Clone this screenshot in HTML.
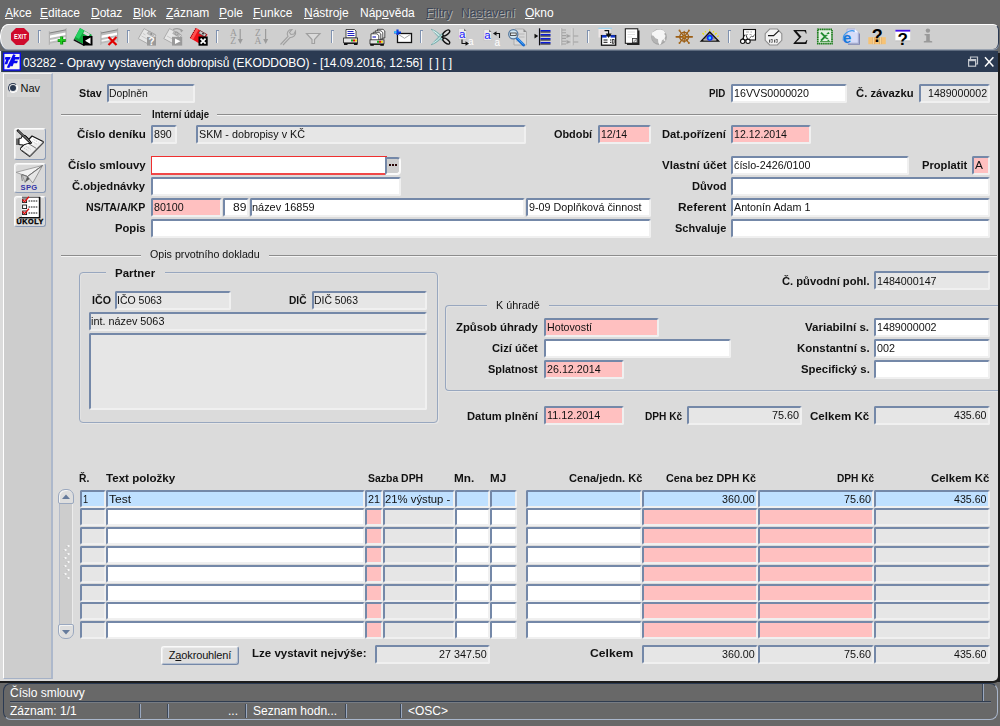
<!DOCTYPE html><html><head><meta charset="utf-8"><title>Form</title><style>
*{box-sizing:border-box;margin:0;padding:0}
html,body{width:1000px;height:726px;overflow:hidden;background:#696969;font-family:"Liberation Sans",sans-serif;}
body{position:relative}
.a{position:absolute}
.menu{position:absolute;left:0;top:0;width:1000px;height:22px;background:#696969;color:#fff;font-size:12px;line-height:14px}
.menu span{position:absolute;top:6px;white-space:nowrap}
.menu u{text-decoration:underline;text-underline-offset:1px;text-decoration-thickness:1px}
.menu .dis{color:#3c4658;text-shadow:1px 1px 0 #b0b0b0}
.tb{position:absolute;left:0;top:24px;width:999px;height:25px;background:#cfcfcf;border-radius:8px 6px 6px 8px / 12px 6px 6px 12px;border-top:1px solid #fff;border-left:1px solid #fff;border-right:1px solid #2b3a52;box-shadow:0 1px 0 #9aa3b0, 0 2px 0 #5d6a7e}
.sep{position:absolute;top:30px;width:3px;height:13px;border-left:1px solid #7f92b0;border-top:1px solid #7f92b0;box-shadow:inset 1px 0 0 #f8f8f8}
.title{position:absolute;left:1px;top:51px;width:997px;height:21px;background:#2b3a52;color:#fff;font-size:12px;line-height:23px;white-space:nowrap;letter-spacing:-0.05px}
.form{position:absolute;left:0px;top:72px;width:998px;height:609px;background:#dbdbdb;border-bottom-right-radius:5px;box-shadow:1px 1px 0 1px #1c1c1c}
.left{position:absolute;left:3px;top:73px;width:50px;height:606px;background:#cdcdcd;border-left:1px solid #fff;border-top:1px solid #f0f0f0;border-right:2px solid #adb8cb;border-bottom:1px solid #a5b1c6}
.l{position:absolute;font-size:11px;font-weight:bold;color:#111;white-space:nowrap;line-height:13px;text-align:right}
.ll{position:absolute;font-size:11px;font-weight:bold;color:#111;white-space:nowrap;line-height:13px;text-align:left}
.n{position:absolute;font-size:11px;color:#111;white-space:nowrap;line-height:13px}
.f{position:absolute;font-size:11px;color:#111;white-space:nowrap;overflow:hidden;background:#fff;border-top:2px solid #7488a8;border-left:2px solid #7488a8;border-bottom:2px solid #f0f0f0;border-right:2px solid #f0f0f0;padding-left:0px;padding-right:1px;letter-spacing:-0.28px;border-radius:2px}
.f.d{background:#e6e6e6}
.f.p{background:#ffc0c0}
.f.s{background:#bfe0ff}
.f.r{text-align:right}
.hl{position:absolute;height:2px;border-top:1px solid #8c8c8c;border-bottom:1px solid #f4f4f4}
.gb{position:absolute;border:1px solid #98a7bf;border-radius:4px;box-shadow:1px 1px 0 #e6e6e6, inset 1px 1px 0 #e2e2e2}
.gbl{position:absolute;background:#dbdbdb;font-size:11px;line-height:13px;white-space:nowrap;color:#111;letter-spacing:-0.2px}
.lb{position:absolute;left:14px;width:32px;background:#d9d9d9;border-top:1px solid #fbfbfb;border-left:1px solid #fbfbfb;border-right:1px solid #8b9bb6;border-bottom:1px solid #8b9bb6;border-radius:3px;box-shadow:inset 1px 1px 0 #efefef}
.status{position:absolute;left:0;top:683px;width:1000px;height:43px;background:#686868;color:#fff;font-size:12px}
</style></head><body>
<div class="menu">
<span style="left:5px"><u>A</u>kce</span>
<span style="left:40px"><u>E</u>ditace</span>
<span style="left:91px"><u>D</u>otaz</span>
<span style="left:133px"><u>B</u>lok</span>
<span style="left:166px"><u>Z</u>áznam</span>
<span style="left:219px"><u>P</u>ole</span>
<span style="left:253px"><u>F</u>unkce</span>
<span style="left:304px"><u>N</u>ástroje</span>
<span style="left:360px">Náp<u>o</u>věda</span>
<span style="left:426px" class="dis"><u>F</u>iltry</span>
<span style="left:461px" class="dis">Na<u>s</u>tavení</span>
<span style="left:525px"><u>O</u>kno</span>
</div>
<div class="tb"></div>
<div class="sep" style="left:38px"></div>
<div class="sep" style="left:127px"></div>
<div class="sep" style="left:216px"></div>
<div class="sep" style="left:331px"></div>
<div class="sep" style="left:420px"></div>
<div class="sep" style="left:587px"></div>
<div class="sep" style="left:728px"></div>
<svg class="a" style="left:0;top:22px" width="1000" height="30" viewBox="0 22 1000 30" font-family="Liberation Sans, sans-serif">

<polygon points="16,28 24,28 29,33 29,40 24,45 16,45 11,40 11,33" fill="#cf0a2c"/>
<text x="14" y="38.9" font-size="7" font-weight="bold" fill="#fff" textLength="12.6" lengthAdjust="spacingAndGlyphs">EXIT</text>

<g id="rec">
<polygon points="49.5,33 66,29.8 66,40.5 49.5,43.7" fill="#bcbcbc"/>
<polygon points="50,35.6 65.5,32.6 65.5,35 50,38" fill="#fff"/>
<polygon points="50,40 65.5,37 65.5,38.8 50,41.8" fill="#f6f6f6"/>
<path d="M49.3,31.5 V45 M66.2,28.5 V42" stroke="#8c8c8c" stroke-width="0.8" stroke-dasharray="1 1"/>
<path d="M49.5,33 L66,29.8" stroke="#7c7c7c" stroke-width="0.9"/>
</g>
<path d="M61.7,36.5 V44.5 M57.7,40.5 H65.7" stroke="#0a8f0a" stroke-width="3"/>
<path d="M61.2,37 V44 M58.2,40 H65" stroke="#22d422" stroke-width="1.4"/>

<polygon points="80,28 92,35 85,45 74,39" fill="#0ea83c"/>
<polygon points="80,28 84,30.5 79,39 75.5,37" fill="#25d060"/>
<polygon points="84.5,31 90,34 88.5,36.5 83,33.5" fill="#d8d8d8"/>
<polygon points="74,39 85,45 84,46 73.5,40.5" fill="#111"/>
<rect x="83" y="36" width="9.5" height="9.5" fill="#000"/>
<polygon points="85,40.7 90.5,37.5 90.5,44" fill="#fff"/>

<g transform="translate(51.5,0)">
<polygon points="49.5,33 66,29.8 66,40.5 49.5,43.7" fill="#bcbcbc"/>
<polygon points="50,35.6 65.5,32.6 65.5,35 50,38" fill="#fff"/>
<polygon points="50,40 65.5,37 65.5,38.8 50,41.8" fill="#f6f6f6"/>
<path d="M49.3,31.5 V45 M66.2,28.5 V42" stroke="#8c8c8c" stroke-width="0.8" stroke-dasharray="1 1"/>
<path d="M49.5,33 L66,29.8" stroke="#7c7c7c" stroke-width="0.9"/>
</g>
<path d="M108.5,37 L116.5,45 M116.5,37 L108.5,45" stroke="#e00000" stroke-width="2.2"/>

<polygon points="144,28.6 156,35 150,45 138.3,38.6" fill="#e6e6e6" stroke="#a6a6a6" stroke-width="0.9"/>
<polygon points="148.8,31 154.6,34.2 153,36.8 147.2,33.6" fill="#bdbdbd" stroke="#9a9a9a" stroke-width="0.5"/>
<path d="M141.5,36 L147,39 M143,33.5 L145.5,34.9" stroke="#c4c4c4" stroke-width="0.9"/>
<circle cx="151.2" cy="34" r="0.9" fill="#8a8a8a"/>
<rect x="147" y="37" width="9" height="8.6" fill="#9a9a9a"/>
<text x="151.5" y="45.2" font-size="10" font-weight="bold" fill="#fff" text-anchor="middle">?</text>

<polygon points="169.5,28.6 181.5,35 175.5,45 163.8,38.6" fill="#e6e6e6" stroke="#a6a6a6" stroke-width="0.9"/>
<polygon points="174.3,31 180.1,34.2 178.5,36.8 172.7,33.6" fill="#bdbdbd" stroke="#9a9a9a" stroke-width="0.5"/>
<path d="M167,36 L172.5,39" stroke="#c4c4c4" stroke-width="0.9"/>
<path d="M173,29.6 q5,-2.2 9,0.8" stroke="#9c9c9c" fill="none" stroke-width="1.1"/>
<polygon points="180,29 183.3,30.6 181,32.6" fill="#9c9c9c"/>
<circle cx="176.6" cy="33.6" r="1.6" fill="none" stroke="#8f8f8f" stroke-width="0.8"/>
<rect x="172" y="36.8" width="10.2" height="8.8" fill="#9a9a9a"/>
<polygon points="175,38.4 180.5,41.2 175,44" fill="#fff"/>

<polygon points="196,28 207.5,34.5 201,44.5 190,38" fill="#f01018"/>
<polygon points="196,28 198.6,29.5 193,39.8 190,38" fill="#ff5050"/>
<path d="M195.6,28.6 L190.3,38" stroke="#8a0008" stroke-width="1.1" stroke-dasharray="1 1"/>
<polygon points="200,30.6 206.3,34.2 204.8,36.8 198.6,33.2" fill="#c8c8c8" stroke="#222" stroke-width="0.5"/>
<circle cx="203" cy="33.6" r="0.9" fill="#222"/>
<rect x="198.5" y="36.5" width="9.2" height="9.2" fill="#000"/>
<path d="M200.6,38.6 L205.6,43.6 M205.6,38.6 L200.6,43.6" stroke="#fff" stroke-width="1.7"/>

<g fill="#9b9b9b" stroke="none" font-family="Liberation Serif, serif">
<text x="230" y="36" font-size="9.5">A</text>
<text x="230.3" y="44.2" font-size="9.5">Z</text>
<rect x="239.6" y="29" width="1.2" height="13"/>
<polygon points="237.8,39 242.8,39 240.3,44"/>

<text x="255" y="36" font-size="9.5">Z</text>
<text x="254.6" y="44.2" font-size="9.5">A</text>
<rect x="265" y="29" width="1.2" height="13"/>
<polygon points="263.2,39 268.2,39 265.7,44"/>
</g>

<path d="M280.5,44.5 L288,36.5 C286,33 288,29.5 292,29.5 L289.5,32.5 L291,34.5 L294,34 L295.5,31 C296.5,35 293,38 290,37.5 L283,45" fill="none" stroke="#a0a0a0" stroke-width="1.1"/>

<path d="M306.5,33.5 H320 L314.5,39.5 V43.5 H312 V39.5 Z" fill="#dadada" stroke="#a0a0a0" stroke-width="1.2"/>

<g id="prn">
<polygon points="346,29.5 354.5,29.5 356,31 356,38 346,38" fill="#fff" stroke="#222" stroke-width="0.8"/>
<path d="M347.5,31.5 H353.5 M347.5,33.5 H354.5 M347.5,35.5 H354.5" stroke="#2020c0" stroke-width="1"/>
<rect x="343.6" y="38" width="14" height="4.8" fill="#e4e4e4" stroke="#222" stroke-width="0.8"/>
<rect x="351" y="39.5" width="2" height="2" fill="#18b018"/><rect x="353" y="39.5" width="2" height="2" fill="#e01010"/><rect x="355" y="39.5" width="1.8" height="2" fill="#e8d800"/>
<rect x="344" y="43" width="3.5" height="2" fill="#111"/><rect x="354" y="43" width="3.5" height="2" fill="#111"/><rect x="344" y="43" width="13.5" height="0.9" fill="#111"/>
</g>

<g fill="#fff" stroke="#222" stroke-width="0.8">
<polygon points="377.5,29.3 383,29.3 384.8,31 384.8,38 377.5,38"/>
<polygon points="375.3,30.8 381,30.8 382.8,32.5 382.8,39 375.3,39"/>
<polygon points="373.2,32.3 379,32.3 380.8,34 380.8,40 373.2,40"/>
<polygon points="371,33.8 377,33.8 378.8,35.5 378.8,41 371,41"/>
</g>
<path d="M372.5,37 H376" stroke="#2020c0" stroke-width="1.2"/>
<rect x="370" y="39.8" width="14" height="4" fill="#e4e4e4" stroke="#222" stroke-width="0.8"/>
<rect x="377" y="40.8" width="2" height="2" fill="#18b018"/><rect x="379" y="40.8" width="2" height="2" fill="#e01010"/><rect x="381" y="40.8" width="1.8" height="2" fill="#e8d800"/>
<rect x="370.3" y="44" width="3.5" height="1.8" fill="#111"/><rect x="380.3" y="44" width="3.5" height="1.8" fill="#111"/><rect x="370.3" y="44" width="13.5" height="0.9" fill="#111"/>

<rect x="397.5" y="33.5" width="14" height="9" fill="#fff" stroke="#111" stroke-width="1.3"/>
<path d="M398.3,34.3 L404.5,38.3 L410.7,34.3" fill="none" stroke="#9a9a9a" stroke-width="0.9"/>
<path d="M394,32.5 H401 M397.5,29.5 V35" stroke="#0a3ce0" stroke-width="2.2"/>
<path d="M394.2,32.2 H396.5" stroke="#30d0ff" stroke-width="1.6"/>

<path d="M431.2,29.2 Q437.5,31 444.5,39.3 L442.3,40.8 Q436,34.5 431.2,29.2 Z" fill="#a4d2d0" stroke="#5e9a9a" stroke-width="0.6"/>
<path d="M432.6,30.5 Q437,32.8 442.5,39" fill="none" stroke="#f2fbfb" stroke-width="0.8"/>
<path d="M431.2,44.8 Q437.5,43 444.5,34.7 L442.3,33.2 Q436,39.5 431.2,44.8 Z" fill="#8cc4c2" stroke="#5e9a9a" stroke-width="0.6"/>
<path d="M432.6,43.5 Q437,41.2 442.5,35" fill="none" stroke="#e6f6f6" stroke-width="0.8"/>
<ellipse cx="446.3" cy="32.9" rx="4" ry="1.9" fill="#d8d8d8" stroke="#111" stroke-width="1.4" transform="rotate(-38 446.3 32.9)"/>
<ellipse cx="446.3" cy="41.1" rx="4" ry="1.9" fill="#d8d8d8" stroke="#111" stroke-width="1.4" transform="rotate(38 446.3 41.1)"/>
<path d="M440.6,37 L443.6,35 L443.6,39 Z" fill="#111"/>

<polygon points="458.6,28.6 464,28.6 466.4,31 466.4,39.5 458.6,39.5" fill="#ececec" stroke="#bbb" stroke-width="0.5"/>
<text x="459" y="38" font-size="11.5" fill="#1a1aff">a</text>
<text x="468" y="45.3" font-size="10" fill="#fff">a</text>
<path d="M462,39.5 V43.5 H466" fill="none" stroke="#111" stroke-width="1.1"/>
<polygon points="465.5,41.3 469,43.5 465.5,45.7" fill="#111"/>
<polygon points="464,28.6 466.4,31 464,31" fill="#777"/>

<polygon points="484,29.6 489,29.6 491.6,32 491.6,40.5 484,40.5" fill="#ececec" stroke="#bbb" stroke-width="0.5"/>
<text x="484.3" y="39" font-size="11.5" fill="#1a1aff">a</text>
<text x="494.6" y="45.8" font-size="10" fill="#fff">a</text>
<path d="M499.5,38 V33.5 H496" fill="none" stroke="#111" stroke-width="1.1"/>
<polygon points="496.5,31.3 493,33.5 496.5,35.7" fill="#111"/>
<polygon points="489,29.6 491.6,32 489,32" fill="#777"/>

<polygon points="515,29 523.5,29 526.5,32 526.5,45 514,45 514,30.5" fill="#d9d9d9" stroke="#a2a2a2" stroke-width="0.8"/>
<polygon points="523.5,29 526.5,32 523.5,32" fill="#8a8a8a"/>
<path d="M519,34 H524.5 M519,37 H524.5 M516,41 H520" stroke="#b8b8b8" stroke-width="1"/>
<path d="M517.3,38.8 L523.6,45" stroke="#1468d0" stroke-width="2.8" stroke-linecap="round"/>
<path d="M517.6,38.4 L523.4,44.2" stroke="#58b8ff" stroke-width="0.9" stroke-linecap="round"/>
<circle cx="513.3" cy="34.2" r="4.6" fill="#cfe6f4" stroke="#56789c" stroke-width="1.3"/>
<rect x="510.4" y="33" width="5.8" height="2.4" fill="#dfe9ee" stroke="#333" stroke-width="0.8"/>

<polygon points="534.5,33.8 538.3,36.1 534.5,38.4" fill="#111"/>
<rect x="539" y="28.3" width="1.2" height="17" fill="#111"/>
<rect x="538.2" y="28.3" width="0.8" height="17" fill="#b8b8c8"/>
<g fill="#0a1ad8"><rect x="540.5" y="30" width="10" height="1.6"/><rect x="540.5" y="34" width="10" height="1.6"/><rect x="540.5" y="38" width="10" height="1.6"/><rect x="540.5" y="42" width="10" height="1.6"/></g>
<g fill="#111"><rect x="540.5" y="31.6" width="10" height="0.9"/><rect x="540.5" y="35.6" width="10" height="0.9"/><rect x="540.5" y="39.6" width="10" height="0.9"/><rect x="540.5" y="43.6" width="10" height="0.9"/></g>

<g stroke="#a2a2a2" stroke-width="1.1" fill="#a2a2a2">
<path d="M561.7,28.3 V45.3 M573,28.3 V45.3" />
<path d="M562,30 H566 M562,32.8 H566 M562,35.6 H566 M562,38.4 H566 M562,41.2 H566 M562,44 H566 M573.5,36 H578.3 M573.5,42 H578.3"/>
<polygon points="566.5,34 571,36 566.5,38" stroke="none"/><polygon points="566.5,40 571,42 566.5,44" stroke="none"/>
</g>
<path d="M560.8,28.3 V45.3 M572.1,28.3 V45.3" stroke="#e6e6e6" stroke-width="0.8"/>

<rect x="598.5" y="28.5" width="12" height="9" fill="#eee8e8"/>
<rect x="598.3" y="27.8" width="13.7" height="1" fill="#8fd0f0"/>
<path d="M600,31 H604 M600,33 H603.5 M600,35 H603" stroke="#e0c4c4" stroke-width="0.8"/>
<rect x="601.5" y="35.6" width="14.2" height="9.6" fill="#fff" stroke="#111" stroke-width="1.3"/>
<rect x="602" y="35.2" width="4.6" height="2.4" fill="#1436c8"/><rect x="610.6" y="35.2" width="4.6" height="2.4" fill="#1436c8"/>
<path d="M604.5,30.6 H608.6 V34" fill="none" stroke="#111" stroke-width="1.2"/>
<polygon points="605.6,33.6 611.6,33.6 608.6,38" fill="#111"/>
<path d="M603.5,40 H607.5 M603.5,42.3 H607.5 M610,40 H611.3 M610,42.3 H611.3" stroke="#111" stroke-width="1"/>
<rect x="612.3" y="39.6" width="1.8" height="3.6" fill="none" stroke="#111" stroke-width="0.8"/>

<rect x="627" y="30.5" width="12.5" height="14.5" fill="#222"/>
<rect x="625.3" y="28.8" width="12.5" height="14.5" fill="#fff" stroke="#111" stroke-width="1"/>
<path d="M627.5,32 H635 M627.5,34.5 H635 M627.5,37 H632" stroke="#ddd" stroke-width="0.9"/>
<rect x="632.5" y="38.5" width="4.6" height="4.2" fill="#e8e8e8" stroke="#333" stroke-width="0.8"/>
<path d="M633.5,42 L636.5,39.3" stroke="#555" stroke-width="0.7"/>

<circle cx="659" cy="37" r="7.9" fill="#a6a6a6"/>
<circle cx="658.6" cy="36.6" r="7" fill="#b4b4b4"/>
<path d="M654,31.5 l3,-1.8 3.5,-0.3 3,1.2 2,2.3 -1.5,0.8 1.5,2 -1,3 -2.5,1.5 -1,3.5 -1.5,1.2 -1.2,-2.5 -0.3,-3.2 -2.5,-1 -2,-2.5 -1.8,-0.5 0.5,-2.7 z" fill="#f6f6f6"/>
<path d="M663.5,39.5 l1.5,-1 0.3,1.8 -1,1.2 z" fill="#ececec"/>

<g stroke="#9c5e14" fill="none" stroke-linecap="round">
<circle cx="684.2" cy="36.8" r="4.4" stroke-width="1.4"/>
<path d="M676.3,36.8 H692.2" stroke-width="1.7"/>
<path d="M684.2,31.4 V42.2 M679.6,30.8 L688.8,42.8 M688.8,30.8 L679.6,42.8" stroke-width="1.2"/>
<circle cx="684.2" cy="36.8" r="1.4" fill="#c88a30" stroke-width="0.7"/>
</g>
<g fill="#a86a1c"><circle cx="679.5" cy="30.6" r="1"/><circle cx="688.9" cy="30.6" r="1"/><circle cx="679.5" cy="43" r="1"/><circle cx="688.9" cy="43" r="1"/></g>

<path d="M702.5,33 l1.5,1.5 M705,31 l1,1.5 M709.6,29.4 l0.2,1.4 M713.8,31 l-0.8,1.5 M716.6,33 l-1.5,1.5 M718.6,35.6 l-1.2,1.3" stroke="#f0e400" stroke-width="1.1"/>
<polygon points="709.8,32 718.6,41 701.2,41" fill="#8e8e8e" stroke="#111" stroke-width="1.3" stroke-linejoin="miter"/>
<path d="M703.5,40 H716.2" stroke="#c8c8c8" stroke-width="1"/>
<circle cx="709.8" cy="37.8" r="3" fill="#0a28ff"/><circle cx="709.8" cy="38" r="1.4" fill="#30d8ff"/>

<rect x="743.5" y="29.5" width="12" height="10.5" fill="#fff" stroke="#111" stroke-width="1.1"/>
<path d="M746,32 H749 M750.5,32 H752 M746,34.5 H748 M749.5,34.5 H751.5" stroke="#999" stroke-width="0.8"/>
<path d="M749.5,38.5 l2,-2.5 1.5,1 1.5,-2.5" fill="none" stroke="#444" stroke-width="0.8"/>
<circle cx="742.7" cy="41.3" r="2.2" fill="#fff" stroke="#111" stroke-width="1.1"/>
<circle cx="748" cy="41.3" r="2.2" fill="#fff" stroke="#111" stroke-width="1.1"/>
<path d="M742.5,39 L745,34.5 M747.5,39 L746,35" stroke="#111" stroke-width="0.9" fill="none"/>

<polygon points="769.7,29 777.3,29 781.8,33.6 781.8,40.4 777.3,45 769.7,45 765.2,40.4 765.2,33.6" fill="#f4f4f4" stroke="#8e8e8e" stroke-width="1.1"/>
<path d="M768,35.6 H773.6 L779,30.6" fill="none" stroke="#1a1a1a" stroke-width="1.2"/>
<g fill="#555"><rect x="769" y="39.6" width="1" height="3"/><rect x="771" y="39.6" width="1.6" height="3" fill="none" stroke="#555" stroke-width="0.6"/><rect x="774" y="39.6" width="1" height="3"/><rect x="776" y="39.6" width="1.6" height="3" fill="none" stroke="#555" stroke-width="0.6"/></g>

<path d="M793.5,30 H806 L806.6,33.5 H805.8 C805.5,31.6 805,31.2 803,31.2 H796.5 L801.5,36.8 L796,42.3 H803.5 C805.5,42.3 806,41.8 806.6,40 H807.4 L806.4,44 H793.5 V43.2 L799,37.3 L793.5,30.8 Z" fill="#111"/>

<rect x="817.8" y="29.4" width="14.2" height="14.2" fill="#e2f0e2" stroke="#1c7c1c" stroke-width="1.7" stroke-dasharray="1.6 0.5"/>
<path d="M821,32.6 L829,40.6 M829,32.6 L821,40.6" stroke="#1f8a2f" stroke-width="2"/>
<path d="M825.5,34.6 H830.4 M825.8,37 H830.4 M825.5,39.4 H830.4" stroke="#f4fbf4" stroke-width="0.8"/>
<path d="M820,41.6 H830.4" stroke="#1c7c1c" stroke-width="0.8"/>

<polygon points="847,29 855,29 858.3,32.3 858.3,43.2 847,43.2" fill="#d6dcf8" stroke="#a0a8d4" stroke-width="0.8"/>
<path d="M848,44.2 H859.4 V33.5" fill="none" stroke="#7c84b4" stroke-width="1.1"/>
<polygon points="855,29 858.3,32.3 855,32.3" fill="#f4f6ff"/>
<text x="842.8" y="42.6" font-size="15.5" font-weight="bold" fill="#1678dc">e</text>
<path d="M843.2,40.5 Q842.5,34 849,31.2 Q853,30 854.5,31.5" fill="none" stroke="#3898ee" stroke-width="1.1"/>

<g fill="#f6c274"><rect x="868.3" y="37.2" width="4.2" height="7"/><rect x="874.8" y="37.2" width="4.4" height="7"/><rect x="881.6" y="37.2" width="4.2" height="7"/></g>
<g fill="#e8a850"><rect x="872.5" y="37.2" width="2.3" height="7"/><rect x="879.2" y="37.2" width="2.4" height="7"/></g>
<g fill="#fde4b8"><rect x="873.3" y="37.2" width="0.7" height="7"/><rect x="880" y="37.2" width="0.7" height="7"/></g>
<text x="877.3" y="42" font-size="18" font-weight="bold" fill="#000" text-anchor="middle">?</text>

<rect x="895.4" y="30" width="14.8" height="10.8" fill="#fff"/>
<path d="M895.4,40.8 H910.2" stroke="#aaa" stroke-width="0.6"/>
<rect x="895.4" y="29.8" width="14.8" height="1.8" fill="#4410e8"/>
<text x="902.6" y="44.8" font-size="17" font-weight="bold" fill="#000" text-anchor="middle">?</text>

<g fill="#999"><circle cx="927.9" cy="30.6" r="2.2"/><path d="M924.6,34 H929.8 V40.8 L932.2,41.3 V42.6 H923.8 V41.3 L926.2,40.8 V35.6 L924.6,35.2 Z"/></g>
</svg>

<div class="title"><span class="a" style="left:22px;top:1px">03282 - Opravy vystavených dobropisů (EKODDOBO) - [14.09.2016; 12:56]&nbsp; [ ] [ ]</span></div>
<svg class="a" style="left:0;top:51px" width="1000" height="22" viewBox="0 51 1000 22">
<rect x="0" y="50.5" width="1.1" height="22" fill="#f4f4f4"/>
<rect x="3.7" y="53.2" width="16.6" height="16.8" fill="#f7f7f2" stroke="#0a0af0" stroke-width="1.4"/>
<g transform="translate(12,61.5) scale(1.18) translate(-12.2,-61.2)">
<path d="M6.6,57.3 H11 L10.4,59.4 H9.6 L8.2,63.6 H5.9 L7.3,59.4 H6 Z" fill="#0808f0"/>
<path d="M13.2,55 L15.3,55.6 L9.9,66.8 L7.8,66.2 Z" fill="#0808f0"/>
<path d="M13.4,57.3 H18.7 L18,59.4 H14.8 L14.4,60.6 H17.2 L16.5,62.6 H13.7 L12.7,65.2 H10.4 Z" fill="#0808f0"/>
</g>
<g fill="none" stroke="#c4c8cf" stroke-width="1.2">
<path d="M970.5,59.5 V57 H977.5 V64 H975.5"/>
<rect x="968.6" y="59.6" width="7" height="6.6"/>
<path d="M968.6,60.6 H975.6"/>
</g>
<path d="M985,57.2 L993.4,66.4 M993.4,57.2 L985,66.4" stroke="#fff" stroke-width="1.5" fill="none"/>
</svg>

<div class="a" style="left:998px;top:53px;width:2px;height:629px;background:#1c1c1c"></div>
<div class="form"></div>
<div class="left"></div>
<div class="a" style="left:7px;top:79px;width:33px;height:18px;background:#d6d6d6"></div>
<div class="a" style="left:7.5px;top:82.5px;width:10px;height:10px;border-radius:50%;background:#e8e8e8;border:1px solid #2b3a52;border-right-color:#fff;border-bottom-color:#fff;transform:rotate(0deg)"></div>
<div class="a" style="left:9.5px;top:84.5px;width:6px;height:6px;border-radius:50%;background:#2b3a52"></div>
<div class="n" style="left:20.5px;top:81.5px;letter-spacing:0">Nav</div>
<div class="lb" style="top:128px;height:32px"></div>
<div class="lb" style="top:163px;height:30px"></div>
<div class="lb" style="top:196px;height:31px"></div>
<svg class="a" style="left:14px;top:128px" width="32" height="100" viewBox="14 128 32 100" font-family="Liberation Sans, sans-serif">

<polygon points="32,136 43,141.5 29.5,155 20.5,148.3" fill="#fcfcfc" stroke="#111" stroke-width="1.2" stroke-linejoin="round"/>
<path d="M43,141.5 L43.3,143 L29.8,156.8 L20.6,150 L20.5,148.3" fill="#eee" stroke="#111" stroke-width="0.9" stroke-linejoin="round"/>
<path d="M22,150.3 L29.8,156 M43.2,142.3 L29.7,155.9" stroke="#111" stroke-width="0.6"/>
<path d="M26.3,142.2 L36.3,148.4" stroke="#555" stroke-width="0.8"/>
<path d="M33.5,139.5 l5,2.7 M32,141.5 l5,2.7 M25.5,146 l5,3.2 M24,148 l4.5,3" stroke="#aaa" stroke-width="0.7" stroke-dasharray="1.5 1"/>
<rect x="16" y="138.5" width="3" height="6.5" fill="#6a6a6a"/>
<polygon points="19,138.3 21.3,138.3 22,136 25,135.3 27.2,137 29.3,139.7 31.5,143.3 27.5,143.6 23.5,145 19,144.6" fill="#fff" stroke="#111" stroke-width="1" stroke-linejoin="round"/>
<path d="M17.2,129.8 L31.2,143.3" stroke="#111" stroke-width="2.3"/>
<path d="M17.8,130.4 L30.5,142.6" stroke="#eee" stroke-width="0.6"/>

<polygon points="16,172.3 42.5,165.5 27.5,176.5 22,174.5" fill="#f2f2f2" stroke="#9a9a9a" stroke-width="0.9" stroke-linejoin="round"/>
<polygon points="42.5,165.5 32.8,183 27.5,176.5" fill="#e6e6e6" stroke="#8e8e8e" stroke-width="0.9" stroke-linejoin="round"/>
<polygon points="27.5,176.5 25,182.5 22,174.5" fill="#c8c8c8" stroke="#888" stroke-width="0.7"/>
<polygon points="27.5,176.5 25,182.5 29.5,179" fill="#555"/>
<path d="M22,174.5 L27.5,176.5 L42.5,165.5" fill="none" stroke="#666" stroke-width="0.8"/>
<path d="M21.3,174.5 L22.3,181" stroke="#777" stroke-width="0.9"/>
<text x="29" y="189.8" font-size="7.6" font-weight="bold" fill="#3434a8" text-anchor="middle" letter-spacing="0.3">SPG</text>

<path d="M22,197.5 H39.5 V217.5 H21" fill="none" stroke="#111" stroke-width="1.4"/>
<rect x="21.8" y="197.6" width="17" height="19.5" fill="#fff"/>
<path d="M39.6,197 V217.6 H20" fill="none" stroke="#111" stroke-width="1.4"/>
<g fill="#fff" stroke="#111" stroke-width="0.9"><rect x="22.6" y="199" width="4" height="3.6"/><rect x="22.6" y="205" width="4" height="3.6"/><rect x="22.6" y="211" width="4" height="3.6"/></g>
<path d="M28.5,201 H37.5 M28.5,207 H37.5 M28.5,213 H37.5" stroke="#111" stroke-width="1" stroke-dasharray="1.6 0.8"/>
<path d="M22.5,199.5 l2,2.2 4.5,-5 M22.5,211.5 l2,2.2 4.5,-5" fill="none" stroke="#e01010" stroke-width="1.3"/>
<text x="30.2" y="224.3" font-size="7.2" font-weight="bold" fill="#000" text-anchor="middle" stroke="#000" stroke-width="0.35" letter-spacing="0.55">ÚKOLY</text>
</svg>

<div class="ll" style="left:79.21px;top:87.0px;transform-origin:0 50%;transform:scaleX(0.9732)">Stav</div>
<div class="f d" style="left:107px;top:84px;width:88px;height:19px;"></div>
<div class="n" style="left:108.92px;top:86.5px;transform-origin:0 50%;transform:scaleX(0.9455)">Doplněn</div>
<div class="ll" style="left:709.23px;top:87.0px;transform-origin:0 50%;transform:scaleX(0.8859)">PID</div>
<div class="f " style="left:731px;top:84px;width:116px;height:19px;"></div>
<div class="n" style="left:734.41px;top:86.5px;transform-origin:0 50%;transform:scaleX(0.9725)">16VVS0000020</div>
<div class="ll" style="left:855.99px;top:87.0px;transform-origin:0 50%;transform:scaleX(1.0235)">Č. závazku</div>
<div class="f d" style="left:919px;top:84px;width:71px;height:19px;"></div>
<div class="n" style="left:927.71px;top:86.5px;transform-origin:0 50%;transform:scaleX(0.9652)">1489000002</div>
<div class="hl" style="left:61px;top:114px;width:80px"></div>
<div class="hl" style="left:217px;top:114px;width:780px"></div>
<div class="ll" style="left:151.74px;top:108.0px;transform-origin:0 50%;transform:scaleX(0.8716)">Interní údaje</div>
<div class="ll" style="left:77.18px;top:128.0px;transform-origin:0 50%;transform:scaleX(1.0528)">Číslo deníku</div>
<div class="f d" style="left:151px;top:125px;width:26px;height:19px;"></div>
<div class="n" style="left:154.21px;top:127.5px;transform-origin:0 50%;transform:scaleX(0.9655)">890</div>
<div class="f d" style="left:196px;top:125px;width:330px;height:19px;"></div>
<div class="n" style="left:198.51px;top:127.5px;transform-origin:0 50%;transform:scaleX(0.9795)">SKM - dobropisy v KČ</div>
<div class="ll" style="left:553.50px;top:128.0px;transform-origin:0 50%;transform:scaleX(0.9896)">Období</div>
<div class="f p" style="left:598px;top:125px;width:53px;height:19px;"></div>
<div class="n" style="left:600.52px;top:127.5px;transform-origin:0 50%;transform:scaleX(0.9489)">12/14</div>
<div class="ll" style="left:661.70px;top:128.0px;transform-origin:0 50%;transform:scaleX(1.0142)">Dat.pořízení</div>
<div class="f p" style="left:731px;top:125px;width:80px;height:19px;"></div>
<div class="n" style="left:734.41px;top:127.5px;transform-origin:0 50%;transform:scaleX(0.9614)">12.12.2014</div>
<div class="ll" style="left:67.69px;top:159.0px;transform-origin:0 50%;transform:scaleX(1.0417)">Číslo smlouvy</div>
<div class="f" style="left:151px;top:156px;width:236px;height:19px;border:1px solid #ef2f2f;border-bottom:2px solid #f04848;border-radius:0"></div>
<div class="a" style="left:385px;top:157px;width:16px;height:18px;background:#cfcfcf;border-top:2px solid #7488a8;border-left:2px solid #7488a8;border-right:2px solid #fafafa;border-bottom:2px solid #fafafa;border-radius:0 4px 4px 0"></div>
<div class="a" style="left:389px;top:164px;width:2px;height:2px;background:#2a0808;box-shadow:3px 0 0 #2a0808,6px 0 0 #2a0808"></div>
<div class="ll" style="left:72.19px;top:180.0px;transform-origin:0 50%;transform:scaleX(1.0224)">Č.objednávky</div>
<div class="f " style="left:151px;top:177px;width:250px;height:19px;line-height:14px;"></div>
<div class="ll" style="left:86.01px;top:201.0px;transform-origin:0 50%;transform:scaleX(0.9642)">NS/TA/A/KP</div>
<div class="f p" style="left:151px;top:198px;width:71px;height:19px;"></div>
<div class="n" style="left:153.51px;top:200.5px;transform-origin:0 50%;transform:scaleX(0.9704)">80100</div>
<div class="f r" style="left:223px;top:198px;width:26px;height:19px;"></div>
<div class="n" style="left:232.97px;top:200.5px;transform-origin:0 50%;transform:scaleX(1.0965)">89</div>
<div class="f " style="left:250px;top:198px;width:275px;height:19px;"></div>
<div class="n" style="left:251.70px;top:200.5px;transform-origin:0 50%;transform:scaleX(0.9936)">název 16859</div>
<div class="f " style="left:526px;top:198px;width:125px;height:19px;"></div>
<div class="n" style="left:528.51px;top:200.5px;transform-origin:0 50%;transform:scaleX(0.9790)">9-09 Doplňková činnost</div>
<div class="ll" style="left:115.19px;top:222.0px;transform-origin:0 50%;transform:scaleX(1.0204)">Popis</div>
<div class="f " style="left:151px;top:219px;width:500px;height:19px;line-height:14px;"></div>
<div class="ll" style="left:661.69px;top:159.0px;transform-origin:0 50%;transform:scaleX(1.0472)">Vlastní účet</div>
<div class="f " style="left:731px;top:156px;width:178px;height:19px;"></div>
<div class="n" style="left:734.01px;top:158.5px;transform-origin:0 50%;transform:scaleX(0.9780)">číslo-2426/0100</div>
<div class="ll" style="left:921.70px;top:159.0px;transform-origin:0 50%;transform:scaleX(1.0135)">Proplatit</div>
<div class="f p" style="left:972px;top:156px;width:18px;height:19px;"></div>
<div class="n" style="left:974.68px;top:158.5px;transform-origin:0 50%;transform:scaleX(1.0811)">A</div>
<div class="ll" style="left:692.20px;top:180.0px;transform-origin:0 50%;transform:scaleX(1.0120)">Důvod</div>
<div class="f " style="left:731px;top:177px;width:259px;height:19px;line-height:14px;"></div>
<div class="ll" style="left:677.98px;top:201.0px;transform-origin:0 50%;transform:scaleX(1.0811)">Referent</div>
<div class="f " style="left:731px;top:198px;width:259px;height:19px;"></div>
<div class="n" style="left:733.71px;top:200.5px;transform-origin:0 50%;transform:scaleX(0.9755)">Antonín Adam 1</div>
<div class="ll" style="left:674.70px;top:222.0px;transform-origin:0 50%;transform:scaleX(0.9981)">Schvaluje</div>
<div class="f " style="left:731px;top:219px;width:259px;height:19px;line-height:14px;"></div>
<div class="hl" style="left:61px;top:255px;width:80px"></div>
<div class="hl" style="left:269px;top:255px;width:728px"></div>
<div class="n" style="left:150.21px;top:248.0px;transform-origin:0 50%;transform:scaleX(0.9698)">Opis prvotního dokladu</div>
<div class="gb" style="left:79px;top:272px;width:359px;height:151px"></div>
<div class="gbl" style="left:106px;top:266px;width:59px;height:13px"></div>
<div class="ll" style="left:115.19px;top:266.5px;transform-origin:0 50%;transform:scaleX(1.0417)">Partner</div>
<div class="ll" style="left:91.71px;top:294.0px;transform-origin:0 50%;transform:scaleX(0.9691)">IČO</div>
<div class="f d" style="left:115px;top:291px;width:116px;height:19px;"></div>
<div class="n" style="left:116.76px;top:293.5px;transform-origin:0 50%;transform:scaleX(0.9537)">IČO 5063</div>
<div class="ll" style="left:288.72px;top:294.0px;transform-origin:0 50%;transform:scaleX(0.9239)">DIČ</div>
<div class="f d" style="left:312px;top:291px;width:115px;height:19px;"></div>
<div class="n" style="left:313.62px;top:293.5px;transform-origin:0 50%;transform:scaleX(0.9449)">DIČ 5063</div>
<div class="f d" style="left:89px;top:312px;width:338px;height:19px;"></div>
<div class="n" style="left:91.00px;top:314.5px;transform-origin:0 50%;transform:scaleX(0.9839)">int. název 5063</div>
<div class="f d" style="left:89px;top:333px;width:338px;height:77px;line-height:14px;"></div>
<div class="gb" style="left:445px;top:305px;width:553px;height:86px;border-right:none;border-radius:4px 0 0 4px;box-shadow:0 1px 0 #e6e6e6, inset 1px 1px 0 #e2e2e2"></div>
<div class="gbl" style="left:487px;top:299px;width:62px;height:13px"></div>
<div class="n" style="left:495.71px;top:299.0px;transform-origin:0 50%;transform:scaleX(0.9797)">K úhradě</div>
<div class="ll" style="left:781.70px;top:274.8px;transform-origin:0 50%;transform:scaleX(1.0164)">Č. původní pohl.</div>
<div class="f d" style="left:874px;top:271px;width:116px;height:19px;"></div>
<div class="n" style="left:877.21px;top:274.5px;transform-origin:0 50%;transform:scaleX(0.9735)">1484000147</div>
<div class="ll" style="left:455.99px;top:320.5px;transform-origin:0 50%;transform:scaleX(1.0290)">Způsob úhrady</div>
<div class="f p" style="left:544px;top:318px;width:115px;height:19px;"></div>
<div class="n" style="left:546.71px;top:320.5px;transform-origin:0 50%;transform:scaleX(0.9698)">Hotovostí</div>
<div class="ll" style="left:491.70px;top:341.5px;transform-origin:0 50%;transform:scaleX(1.0132)">Cizí účet</div>
<div class="f " style="left:544px;top:339px;width:187px;height:19px;line-height:14px;"></div>
<div class="ll" style="left:487.70px;top:362.5px;transform-origin:0 50%;transform:scaleX(0.9921)">Splatnost</div>
<div class="f p" style="left:544px;top:360px;width:80px;height:19px;"></div>
<div class="n" style="left:546.71px;top:362.5px;transform-origin:0 50%;transform:scaleX(0.9743)">26.12.2014</div>
<div class="ll" style="left:805.19px;top:320.5px;transform-origin:0 50%;transform:scaleX(1.0480)">Variabilní s.</div>
<div class="f " style="left:874px;top:318px;width:116px;height:19px;"></div>
<div class="n" style="left:877.21px;top:320.5px;transform-origin:0 50%;transform:scaleX(0.9735)">1489000002</div>
<div class="ll" style="left:797.19px;top:341.5px;transform-origin:0 50%;transform:scaleX(1.0424)">Konstantní s.</div>
<div class="f " style="left:874px;top:339px;width:116px;height:19px;"></div>
<div class="n" style="left:877.21px;top:341.5px;transform-origin:0 50%;transform:scaleX(0.9770)">002</div>
<div class="ll" style="left:800.99px;top:362.5px;transform-origin:0 50%;transform:scaleX(1.0321)">Specifický s.</div>
<div class="f " style="left:874px;top:360px;width:116px;height:19px;line-height:14px;"></div>
<div class="ll" style="left:467.20px;top:409.8px;transform-origin:0 50%;transform:scaleX(1.0159)">Datum plnění</div>
<div class="f p" style="left:544px;top:406px;width:80px;height:19px;"></div>
<div class="n" style="left:547.21px;top:408.5px;transform-origin:0 50%;transform:scaleX(0.9831)">11.12.2014</div>
<div class="ll" style="left:644.72px;top:409.8px;transform-origin:0 50%;transform:scaleX(0.9213)">DPH Kč</div>
<div class="f d" style="left:687px;top:406px;width:115px;height:19px;"></div>
<div class="n" style="left:771.50px;top:408.5px;transform-origin:0 50%;transform:scaleX(0.9854)">75.60</div>
<div class="ll" style="left:810.18px;top:409.8px;transform-origin:0 50%;transform:scaleX(1.0523)">Celkem Kč</div>
<div class="f d" style="left:874px;top:406px;width:116px;height:19px;"></div>
<div class="n" style="left:954.21px;top:408.5px;transform-origin:0 50%;transform:scaleX(0.9671)">435.60</div>
<div class="ll" style="left:79.42px;top:471.5px;transform-origin:0 50%;transform:scaleX(0.9327)">Ř.</div>
<div class="ll" style="left:106.08px;top:471.5px;transform-origin:0 50%;transform:scaleX(1.0520)">Text položky</div>
<div class="ll" style="left:367.62px;top:471.5px;transform-origin:0 50%;transform:scaleX(0.9495)">Sazba DPH</div>
<div class="ll" style="left:454.18px;top:471.5px;transform-origin:0 50%;transform:scaleX(1.0707)">Mn.</div>
<div class="ll" style="left:490.28px;top:471.5px;transform-origin:0 50%;transform:scaleX(1.0556)">MJ</div>
<div class="ll" style="left:568.50px;top:471.5px;transform-origin:0 50%;transform:scaleX(1.0083)">Cena/jedn. Kč</div>
<div class="ll" style="left:665.51px;top:471.5px;transform-origin:0 50%;transform:scaleX(0.9814)">Cena bez DPH Kč</div>
<div class="ll" style="left:837.02px;top:471.5px;transform-origin:0 50%;transform:scaleX(0.9213)">DPH Kč</div>
<div class="ll" style="left:931.49px;top:471.5px;transform-origin:0 50%;transform:scaleX(1.0397)">Celkem Kč</div>
<div class="f s" style="left:80px;top:490px;width:26px;height:18px;"></div>
<div class="n" style="left:82.78px;top:492.5px;transform-origin:0 50%;transform:scaleX(0.8400)">1</div>
<div class="f s" style="left:106px;top:490px;width:259px;height:18px;"></div>
<div class="n" style="left:108.67px;top:492.5px;transform-origin:0 50%;transform:scaleX(1.0979)">Test</div>
<div class="f s" style="left:365px;top:490px;width:18px;height:18px;"></div>
<div class="n" style="left:367.91px;top:492.5px;transform-origin:0 50%;transform:scaleX(0.9825)">21</div>
<div class="f s" style="left:383px;top:490px;width:72px;height:18px;"></div>
<div class="n" style="left:385.19px;top:492.5px;transform-origin:0 50%;transform:scaleX(1.0268)">21% výstup -</div>
<div class="f s" style="left:455px;top:490px;width:35px;height:18px;line-height:14px;"></div>
<div class="f s" style="left:490px;top:490px;width:27px;height:18px;line-height:14px;"></div>
<div class="f s" style="left:526px;top:490px;width:116px;height:18px;line-height:14px;"></div>
<div class="f s" style="left:642px;top:490px;width:116px;height:18px;"></div>
<div class="n" style="left:722.01px;top:492.5px;transform-origin:0 50%;transform:scaleX(0.9731)">360.00</div>
<div class="f s" style="left:758px;top:490px;width:116px;height:18px;"></div>
<div class="n" style="left:843.50px;top:492.5px;transform-origin:0 50%;transform:scaleX(0.9854)">75.60</div>
<div class="f s" style="left:874px;top:490px;width:116px;height:18px;"></div>
<div class="n" style="left:954.21px;top:492.5px;transform-origin:0 50%;transform:scaleX(0.9671)">435.60</div>
<div class="f d" style="left:80px;top:508px;width:26px;height:18px;line-height:14px;"></div>
<div class="f " style="left:106px;top:508px;width:259px;height:18px;line-height:14px;"></div>
<div class="f p" style="left:365px;top:508px;width:18px;height:18px;line-height:14px;"></div>
<div class="f d" style="left:383px;top:508px;width:72px;height:18px;line-height:14px;"></div>
<div class="f " style="left:455px;top:508px;width:35px;height:18px;line-height:14px;"></div>
<div class="f " style="left:490px;top:508px;width:27px;height:18px;line-height:14px;"></div>
<div class="f " style="left:526px;top:508px;width:116px;height:18px;line-height:14px;"></div>
<div class="f p r" style="left:642px;top:508px;width:116px;height:18px;line-height:14px;"></div>
<div class="f p r" style="left:758px;top:508px;width:116px;height:18px;line-height:14px;"></div>
<div class="f d r" style="left:874px;top:508px;width:116px;height:18px;line-height:14px;"></div>
<div class="f d" style="left:80px;top:527px;width:26px;height:18px;line-height:14px;"></div>
<div class="f " style="left:106px;top:527px;width:259px;height:18px;line-height:14px;"></div>
<div class="f p" style="left:365px;top:527px;width:18px;height:18px;line-height:14px;"></div>
<div class="f d" style="left:383px;top:527px;width:72px;height:18px;line-height:14px;"></div>
<div class="f " style="left:455px;top:527px;width:35px;height:18px;line-height:14px;"></div>
<div class="f " style="left:490px;top:527px;width:27px;height:18px;line-height:14px;"></div>
<div class="f " style="left:526px;top:527px;width:116px;height:18px;line-height:14px;"></div>
<div class="f p r" style="left:642px;top:527px;width:116px;height:18px;line-height:14px;"></div>
<div class="f p r" style="left:758px;top:527px;width:116px;height:18px;line-height:14px;"></div>
<div class="f d r" style="left:874px;top:527px;width:116px;height:18px;line-height:14px;"></div>
<div class="f d" style="left:80px;top:546px;width:26px;height:18px;line-height:14px;"></div>
<div class="f " style="left:106px;top:546px;width:259px;height:18px;line-height:14px;"></div>
<div class="f p" style="left:365px;top:546px;width:18px;height:18px;line-height:14px;"></div>
<div class="f d" style="left:383px;top:546px;width:72px;height:18px;line-height:14px;"></div>
<div class="f " style="left:455px;top:546px;width:35px;height:18px;line-height:14px;"></div>
<div class="f " style="left:490px;top:546px;width:27px;height:18px;line-height:14px;"></div>
<div class="f " style="left:526px;top:546px;width:116px;height:18px;line-height:14px;"></div>
<div class="f p r" style="left:642px;top:546px;width:116px;height:18px;line-height:14px;"></div>
<div class="f p r" style="left:758px;top:546px;width:116px;height:18px;line-height:14px;"></div>
<div class="f d r" style="left:874px;top:546px;width:116px;height:18px;line-height:14px;"></div>
<div class="f d" style="left:80px;top:565px;width:26px;height:18px;line-height:14px;"></div>
<div class="f " style="left:106px;top:565px;width:259px;height:18px;line-height:14px;"></div>
<div class="f p" style="left:365px;top:565px;width:18px;height:18px;line-height:14px;"></div>
<div class="f d" style="left:383px;top:565px;width:72px;height:18px;line-height:14px;"></div>
<div class="f " style="left:455px;top:565px;width:35px;height:18px;line-height:14px;"></div>
<div class="f " style="left:490px;top:565px;width:27px;height:18px;line-height:14px;"></div>
<div class="f " style="left:526px;top:565px;width:116px;height:18px;line-height:14px;"></div>
<div class="f p r" style="left:642px;top:565px;width:116px;height:18px;line-height:14px;"></div>
<div class="f p r" style="left:758px;top:565px;width:116px;height:18px;line-height:14px;"></div>
<div class="f d r" style="left:874px;top:565px;width:116px;height:18px;line-height:14px;"></div>
<div class="f d" style="left:80px;top:584px;width:26px;height:18px;line-height:14px;"></div>
<div class="f " style="left:106px;top:584px;width:259px;height:18px;line-height:14px;"></div>
<div class="f p" style="left:365px;top:584px;width:18px;height:18px;line-height:14px;"></div>
<div class="f d" style="left:383px;top:584px;width:72px;height:18px;line-height:14px;"></div>
<div class="f " style="left:455px;top:584px;width:35px;height:18px;line-height:14px;"></div>
<div class="f " style="left:490px;top:584px;width:27px;height:18px;line-height:14px;"></div>
<div class="f " style="left:526px;top:584px;width:116px;height:18px;line-height:14px;"></div>
<div class="f p r" style="left:642px;top:584px;width:116px;height:18px;line-height:14px;"></div>
<div class="f p r" style="left:758px;top:584px;width:116px;height:18px;line-height:14px;"></div>
<div class="f d r" style="left:874px;top:584px;width:116px;height:18px;line-height:14px;"></div>
<div class="f d" style="left:80px;top:602px;width:26px;height:18px;line-height:14px;"></div>
<div class="f " style="left:106px;top:602px;width:259px;height:18px;line-height:14px;"></div>
<div class="f p" style="left:365px;top:602px;width:18px;height:18px;line-height:14px;"></div>
<div class="f d" style="left:383px;top:602px;width:72px;height:18px;line-height:14px;"></div>
<div class="f " style="left:455px;top:602px;width:35px;height:18px;line-height:14px;"></div>
<div class="f " style="left:490px;top:602px;width:27px;height:18px;line-height:14px;"></div>
<div class="f " style="left:526px;top:602px;width:116px;height:18px;line-height:14px;"></div>
<div class="f p r" style="left:642px;top:602px;width:116px;height:18px;line-height:14px;"></div>
<div class="f p r" style="left:758px;top:602px;width:116px;height:18px;line-height:14px;"></div>
<div class="f d r" style="left:874px;top:602px;width:116px;height:18px;line-height:14px;"></div>
<div class="f d" style="left:80px;top:621px;width:26px;height:18px;line-height:14px;"></div>
<div class="f " style="left:106px;top:621px;width:259px;height:18px;line-height:14px;"></div>
<div class="f p" style="left:365px;top:621px;width:18px;height:18px;line-height:14px;"></div>
<div class="f d" style="left:383px;top:621px;width:72px;height:18px;line-height:14px;"></div>
<div class="f " style="left:455px;top:621px;width:35px;height:18px;line-height:14px;"></div>
<div class="f " style="left:490px;top:621px;width:27px;height:18px;line-height:14px;"></div>
<div class="f " style="left:526px;top:621px;width:116px;height:18px;line-height:14px;"></div>
<div class="f p r" style="left:642px;top:621px;width:116px;height:18px;line-height:14px;"></div>
<div class="f p r" style="left:758px;top:621px;width:116px;height:18px;line-height:14px;"></div>
<div class="f d r" style="left:874px;top:621px;width:116px;height:18px;line-height:14px;"></div>
<div class="a" style="left:59px;top:496px;width:14px;height:136px;background:#cdcdcd;border-left:1px solid #b4bccb;border-right:1px solid #ececec"></div>
<div class="a" style="left:58px;top:489px;width:16px;height:15px;background:#dedede;border:1px solid #9aa8bf;border-radius:7px 7px 2px 2px;box-shadow:inset 1px 1px 0 #f4f4f4"></div>
<div class="a" style="left:58px;top:624px;width:16px;height:15px;background:#dedede;border:1px solid #9aa8bf;border-radius:2px 2px 7px 7px;box-shadow:inset 1px 1px 0 #f4f4f4"></div>
<svg class="a" style="left:58px;top:489px" width="16" height="150" viewBox="0 0 16 150">
<polygon points="4,10 8,5.5 12,10" fill="#667b9c"/>
<polygon points="4,141 8,145.5 12,141" fill="#667b9c"/>
<g fill="#f6f6f6">
<rect x="9.5" y="56" width="2" height="2"/><rect x="6.5" y="60" width="2" height="2"/><rect x="9.5" y="64" width="2" height="2"/><rect x="6.5" y="68" width="2" height="2"/>
<rect x="9.5" y="72" width="2" height="2"/><rect x="6.5" y="76" width="2" height="2"/><rect x="9.5" y="80" width="2" height="2"/><rect x="6.5" y="84" width="2" height="2"/><rect x="9.5" y="88" width="2" height="2"/>
</g>
<g fill="#b8b8b8">
<rect x="8.5" y="57" width="1" height="1"/><rect x="5.5" y="61" width="1" height="1"/><rect x="8.5" y="65" width="1" height="1"/><rect x="5.5" y="69" width="1" height="1"/>
<rect x="8.5" y="73" width="1" height="1"/><rect x="5.5" y="77" width="1" height="1"/><rect x="8.5" y="81" width="1" height="1"/><rect x="5.5" y="85" width="1" height="1"/><rect x="8.5" y="89" width="1" height="1"/>
</g>
</svg>

<div class="a" style="left:161px;top:646px;width:78px;height:19px;background:#dedede;border:1px solid #fafafa;border-right-color:#7488a8;border-bottom-color:#7488a8;border-radius:3px;box-shadow:inset -1px -1px 0 #b4bfd0, inset 1px 1px 0 #eeeeee;font-size:11px;line-height:17px;text-align:center;color:#111;letter-spacing:-0.15px">Z<u>a</u>okrouhlení</div>
<div class="ll" style="left:252.19px;top:647.0px;transform-origin:0 50%;transform:scaleX(1.0470)">Lze vystavit nejvýše:</div>
<div class="f d" style="left:375px;top:645px;width:115px;height:19px;"></div>
<div class="n" style="left:439.11px;top:647.5px;transform-origin:0 50%;transform:scaleX(0.9773)">27 347.50</div>
<div class="ll" style="left:589.67px;top:647.0px;transform-origin:0 50%;transform:scaleX(1.1068)">Celkem</div>
<div class="f d" style="left:642px;top:645px;width:116px;height:19px;"></div>
<div class="n" style="left:722.01px;top:647.5px;transform-origin:0 50%;transform:scaleX(0.9731)">360.00</div>
<div class="f d" style="left:758px;top:645px;width:116px;height:19px;"></div>
<div class="n" style="left:843.50px;top:647.5px;transform-origin:0 50%;transform:scaleX(0.9854)">75.60</div>
<div class="f d" style="left:874px;top:645px;width:116px;height:19px;"></div>
<div class="n" style="left:954.21px;top:647.5px;transform-origin:0 50%;transform:scaleX(0.9671)">435.60</div>
<div class="status">
<div class="a" style="left:3px;top:0px;width:995px;height:37px;border:1px solid;border-color:#2b3a52 #a9b6cb #a9b6cb #2b3a52;border-radius:8px"></div>
<div class="a" style="left:10px;top:18px;width:981px;height:1px;background:#2f3c50"></div>
<div class="a" style="left:10px;top:19px;width:981px;height:1px;background:#777c84"></div>
<div class="a" style="left:139px;top:21px;width:2px;height:14px;border-left:1px solid #3c4758;border-right:1px solid #9aa8bf"></div>
<div class="a" style="left:167px;top:21px;width:2px;height:14px;border-left:1px solid #3c4758;border-right:1px solid #9aa8bf"></div>
<div class="a" style="left:245px;top:21px;width:2px;height:14px;border-left:1px solid #3c4758;border-right:1px solid #9aa8bf"></div>
<div class="a" style="left:345px;top:21px;width:2px;height:14px;border-left:1px solid #3c4758;border-right:1px solid #9aa8bf"></div>
<div class="a" style="left:400px;top:21px;width:2px;height:14px;border-left:1px solid #3c4758;border-right:1px solid #9aa8bf"></div>
<div class="a" style="left:982px;top:1px;width:2px;height:17px;border-left:1px solid #3c4758;border-right:1px solid #9aa8bf"></div>
<span class="a" style="left:10px;top:3px;line-height:14px">Číslo smlouvy</span>
<span class="a" style="left:10px;top:21px;line-height:14px">Záznam: 1/1</span>
<span class="a" style="left:228px;top:21px;line-height:14px">...</span>
<span class="a" style="left:253px;top:21px;line-height:14px">Seznam hodn...</span>
<span class="a" style="left:408px;top:21px;line-height:14px">&lt;OSC&gt;</span>
</div>
</body></html>
